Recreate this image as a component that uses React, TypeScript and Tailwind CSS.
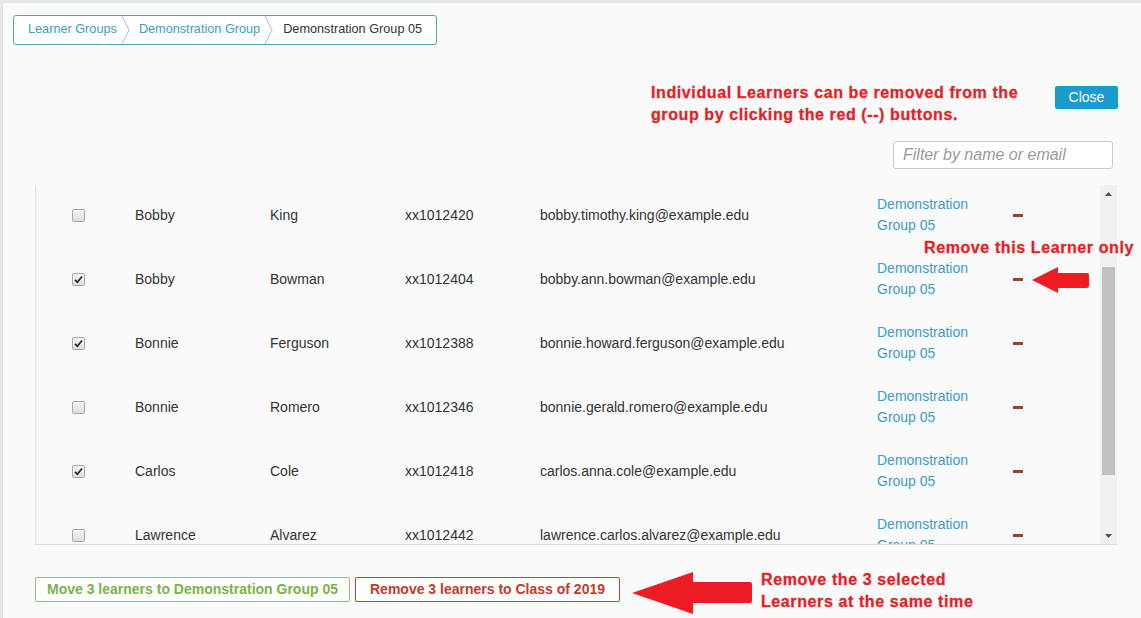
import React from 'react';

type Learner = {
    first: string;
    last: string;
    id: string;
    email: string;
    checked: boolean;
};

const learners: Learner[] = [
    { first: 'Bobby', last: 'King', id: 'xx1012420', email: 'bobby.timothy.king@example.edu', checked: false },
    { first: 'Bobby', last: 'Bowman', id: 'xx1012404', email: 'bobby.ann.bowman@example.edu', checked: true },
    { first: 'Bonnie', last: 'Ferguson', id: 'xx1012388', email: 'bonnie.howard.ferguson@example.edu', checked: true },
    { first: 'Bonnie', last: 'Romero', id: 'xx1012346', email: 'bonnie.gerald.romero@example.edu', checked: false },
    { first: 'Carlos', last: 'Cole', id: 'xx1012418', email: 'carlos.anna.cole@example.edu', checked: true },
    { first: 'Lawrence', last: 'Alvarez', id: 'xx1012442', email: 'lawrence.carlos.alvarez@example.edu', checked: false },
];

function Chevron() {
    return (
        <svg width="10" height="28" viewBox="0 0 10 28" className="shrink-0">
            <polyline points="1,0 8,14 1,28" fill="none" stroke="#9fc3d1" strokeWidth="1" />
        </svg>
    );
}

function Checkbox({ checked }: { checked: boolean }) {
    return (
        <span className="w-[13px] h-[13px] rounded-[2px] border border-[#a8a8a8] bg-gradient-to-b from-[#f6f6f6] to-[#dedede] flex items-center justify-center">
            {checked && (
                <svg width="9" height="9" viewBox="0 0 9 9">
                    <path d="M1 4.8 L3.4 7.2 L8 1.5" fill="none" stroke="#2b2b2b" strokeWidth="1.8" />
                </svg>
            )}
        </span>
    );
}

function Row({ l }: { l: Learner }) {
    return (
        <div className="h-[64px] shrink-0 grid grid-cols-[99px_135px_135px_135px_337px_136px_1fr] items-center text-[14px] text-[#333]">
            <div className="pl-[36px]">
                <Checkbox checked={l.checked} />
            </div>
            <div>{l.first}</div>
            <div>{l.last}</div>
            <div>{l.id}</div>
            <div>{l.email}</div>
            <div className="w-[110px] leading-[21px] text-[#3d9dc9]">Demonstration Group 05</div>
            <div>
                <span className="block w-[10px] h-[3px] bg-[#9c3d2e]" />
            </div>
        </div>
    );
}

export default function App() {
    return (
        <div className="relative w-[1141px] h-[618px] bg-[#e8e8e8] pt-[3px] font-['Liberation_Sans',Arial,sans-serif] overflow-hidden">
            <div className="h-full ml-[2px] border-l border-[#e2e2e2] bg-[#fafafa] flex flex-col">
                {/* Breadcrumb */}
                <div className="self-start ml-[10px] mt-[12px] h-[30px] flex items-center border border-[#5d9fb7] rounded-[3px] bg-white text-[12.7px]">
                    <span className="pl-[14px] pr-[4px] text-[#3d9dc9]">Learner Groups</span>
                    <Chevron />
                    <span className="pl-[8px] pr-[4px] text-[#3d9dc9]">Demonstration Group</span>
                    <Chevron />
                    <span className="pl-[9px] pr-[14px] text-[#333]">Demonstration Group 05</span>
                </div>

                {/* Annotation + close */}
                <div className="flex items-start mt-[37px]">
                    <p className="ml-[648px] w-[390px] text-[16px] leading-[22px] font-bold tracking-[0.6px] text-[#e41f27] [-webkit-text-stroke:0.3px_#e41f27]">
                        Individual Learners can be removed from the group by clicking the red (--) buttons.
                    </p>
                    <button className="ml-auto mr-[23px] mt-[4px] w-[63px] h-[23px] rounded-[2px] bg-[#1a9bcb] text-white text-[14px]">
                        Close
                    </button>
                </div>

                {/* Filter */}
                <div className="self-end mr-[28px] mt-[15px] w-[220px] h-[28px] border border-[#cccccc] rounded-[3px] bg-white flex items-center px-[9px]">
                    <span className="text-[16px] italic text-[#9a9a9a]">Filter by name or email</span>
                </div>

                {/* Table */}
                <div className="ml-[32px] mr-[24px] mt-[16px] h-[360px] border-l border-b border-[#dedede] flex">
                    <div className="flex-1 overflow-hidden">
                        <div className="-mt-[2px] flex flex-col">
                            {learners.map((l) => (
                                <Row key={l.id} l={l} />
                            ))}
                        </div>
                    </div>
                    <div className="w-[17px] bg-[#f1f1f1] flex flex-col">
                        <div className="h-[17px] flex items-center justify-center">
                            <svg width="7" height="4" viewBox="0 0 7 4">
                                <path d="M0 4 L3.5 0 L7 4 Z" fill="#505050" />
                            </svg>
                        </div>
                        <div className="flex-1 px-[2px]">
                            <div className="mt-[65px] h-[208px] bg-[#c1c1c1]" />
                        </div>
                        <div className="h-[17px] flex items-center justify-center">
                            <svg width="7" height="4" viewBox="0 0 7 4">
                                <path d="M0 0 L7 0 L3.5 4 Z" fill="#505050" />
                            </svg>
                        </div>
                    </div>
                </div>

                {/* Bulk actions */}
                <div className="flex items-start ml-[32px] mt-[26px]">
                    <button className="mt-[6px] w-[315px] h-[25px] border border-[#8fc46b] rounded-[2px] bg-white text-[14px] font-bold text-[#79b347]">
                        Move 3 learners to Demonstration Group 05
                    </button>
                    <button className="mt-[6px] ml-[5px] w-[265px] h-[25px] border border-[#c9403a] rounded-[2px] bg-white text-[14px] font-bold text-[#c23a2c]">
                        Remove 3 learners to Class of 2019
                    </button>
                    <svg width="122" height="44" viewBox="0 0 122 44" className="ml-[11px] shrink-0">
                        <path d="M1 22 L62 1 L62 11 L119 11 Q121 11 121 13 L121 30 Q121 32 119 32 L62 32 L62 43 Z" fill="#ed1c24" />
                    </svg>
                    <p className="ml-[8px] -mt-[2px] text-[16px] leading-[22px] font-bold tracking-[0.6px] text-[#e41f27] [-webkit-text-stroke:0.3px_#e41f27]">
                        Remove the 3 selected
                        <br />
                        Learners at the same time
                    </p>
                </div>
            </div>

            {/* Row-level annotation */}
            <p className="absolute left-[924px] top-[237px] text-[16px] leading-[22px] font-bold tracking-[0.6px] text-[#e41f27] [-webkit-text-stroke:0.3px_#e41f27] whitespace-nowrap">
                Remove this Learner only
            </p>
            <svg width="58" height="27" viewBox="0 0 58 27" className="absolute left-[1032px] top-[267px]">
                <path d="M0 13 L26 0 L26 6 L55 6 Q57 6 57 8 L57 19 Q57 21 55 21 L26 21 L26 26 Z" fill="#ed1c24" />
            </svg>
        </div>
    );
}
